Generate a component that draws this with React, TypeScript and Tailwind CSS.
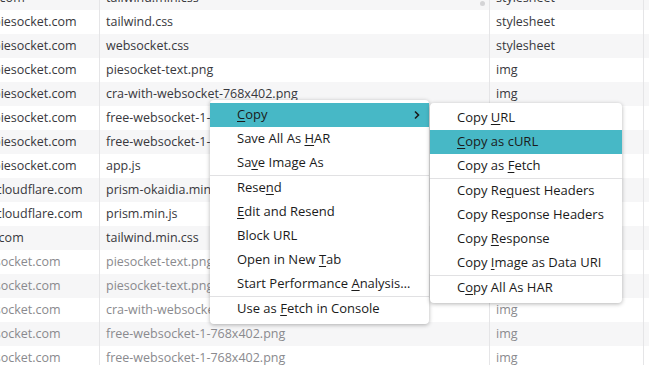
import type { ReactNode } from "react";

type Row = { domain: string; shift: number; file: string; type: string; faded?: boolean };

const rows: Row[] = [
  { domain: "unpkg.com", shift: 40, file: "tailwind.min.css", type: "stylesheet" },
  { domain: "piesocket.com", shift: 7, file: "tailwind.css", type: "stylesheet" },
  { domain: "piesocket.com", shift: 7, file: "websocket.css", type: "stylesheet" },
  { domain: "piesocket.com", shift: 7, file: "piesocket-text.png", type: "img" },
  { domain: "piesocket.com", shift: 7, file: "cra-with-websocket-768x402.png", type: "img" },
  { domain: "piesocket.com", shift: 7, file: "free-websocket-1-768x402.png", type: "img" },
  { domain: "piesocket.com", shift: 7, file: "free-websocket-1-768x402.png", type: "img" },
  { domain: "piesocket.com", shift: 7, file: "app.js", type: "script" },
  { domain: "cdnjs.cloudflare.com", shift: 38, file: "prism-okaidia.min.css", type: "stylesheet" },
  { domain: "cdnjs.cloudflare.com", shift: 38, file: "prism.min.js", type: "script" },
  { domain: "unpkg.com", shift: 41, file: "tailwind.min.css", type: "stylesheet" },
  { domain: "piesocket.com", shift: 23, file: "piesocket-text.png", type: "img", faded: true },
  { domain: "piesocket.com", shift: 23, file: "piesocket-text.png", type: "img", faded: true },
  { domain: "piesocket.com", shift: 23, file: "cra-with-websocket-768x402.png", type: "img", faded: true },
  { domain: "piesocket.com", shift: 23, file: "free-websocket-1-768x402.png", type: "img", faded: true },
  { domain: "piesocket.com", shift: 23, file: "free-websocket-1-768x402.png", type: "img", faded: true },
];

// label with one underlined access key
function Key({ text, at }: { text: string; at?: number }) {
  if (at === undefined) return <>{text}</>;
  return (
    <>
      {text.slice(0, at)}
      <span className="underline underline-offset-2">{text[at]}</span>
      {text.slice(at + 1)}
    </>
  );
}

function Item({ children, active, arrow }: { children: ReactNode; active?: boolean; arrow?: boolean }) {
  return (
    <div
      className={`flex h-6 items-center justify-between pl-[27px] pr-[8px] ${
        active ? "bg-[#47b8c6]" : ""
      }`}
    >
      <span>{children}</span>
      {arrow && (
        <svg width="8" height="10" viewBox="0 0 8 10" className="text-[#1b1b1b]">
          <path d="M2 1.5 L5.5 5 L2 8.5" fill="none" stroke="currentColor" strokeWidth="1.6" />
        </svg>
      )}
    </div>
  );
}

function Sep() {
  return <div className="h-px bg-[#e1e1e3]" />;
}

export default function App() {
  return (
    <div
      className="relative h-[365px] w-[649px] overflow-hidden bg-white text-[12.5px] text-[#38383d]"
      style={{ fontFamily: '"Open Sans", "Noto Sans", sans-serif' }}
    >
      <div className="-mt-[14px]">
        {rows.map((r, i) => (
          <div
            key={i}
            className={`flex h-6 items-center ${i % 2 === 0 ? "bg-[#f6f6f7]" : "bg-white"} ${
              r.faded ? "text-[#8a8a8e]" : ""
            }`}
          >
            <div className="h-full w-[100px] shrink-0 overflow-hidden whitespace-nowrap border-r border-[#e5e5e7] leading-6">
              <span style={{ marginLeft: -r.shift }}>{r.domain}</span>
            </div>
            <div className="h-full w-[390px] shrink-0 overflow-hidden whitespace-nowrap border-r border-[#e5e5e7] pl-[6px] leading-6">
              {r.file}
            </div>
            <div className="h-full w-[154px] shrink-0 overflow-hidden border-r border-[#e5e5e7] pl-[6px] leading-6">
              {r.type}
            </div>
            <div className="h-full flex-1" />
          </div>
        ))}
      </div>

      <div className="absolute left-[480px] top-[1px] h-[5px] w-[5px] rounded-sm bg-[#d4d4d6]" />

      <div className="absolute left-[210px] top-[100px] w-[219px] rounded-[4px] bg-white py-[3px] text-[13px] text-[#1b1b1b] shadow-[0_1px_4px_rgba(0,0,0,0.3)]">
        <Item active arrow>
          <Key text="Copy" at={0} />
        </Item>
        <Item>
          <Key text="Save All As HAR" at={12} />
        </Item>
        <Item>
          <Key text="Save Image As" at={2} />
        </Item>
        <Sep />
        <Item>
          <Key text="Resend" at={4} />
        </Item>
        <Item>
          <Key text="Edit and Resend" at={0} />
        </Item>
        <Item>
          <Key text="Block URL" />
        </Item>
        <Item>
          <Key text="Open in New Tab" at={12} />
        </Item>
        <Item>
          <Key text="Start Performance Analysis…" at={18} />
        </Item>
        <Sep />
        <Item>
          <Key text="Use as Fetch in Console" at={7} />
        </Item>
      </div>

      <div className="absolute left-[430px] top-[103px] w-[192px] rounded-[4px] bg-white py-[3px] text-[13px] text-[#1b1b1b] shadow-[0_1px_4px_rgba(0,0,0,0.3)]">
        <Item>
          <Key text="Copy URL" at={5} />
        </Item>
        <Item active>
          <Key text="Copy as cURL" at={0} />
        </Item>
        <Item>
          <Key text="Copy as Fetch" at={8} />
        </Item>
        <Sep />
        <Item>
          <Key text="Copy Request Headers" at={7} />
        </Item>
        <Item>
          <Key text="Copy Response Headers" at={7} />
        </Item>
        <Item>
          <Key text="Copy Response" at={5} />
        </Item>
        <Item>
          <Key text="Copy Image as Data URI" at={5} />
        </Item>
        <Sep />
        <Item>
          <Key text="Copy All As HAR" at={1} />
        </Item>
      </div>
    </div>
  );
}
